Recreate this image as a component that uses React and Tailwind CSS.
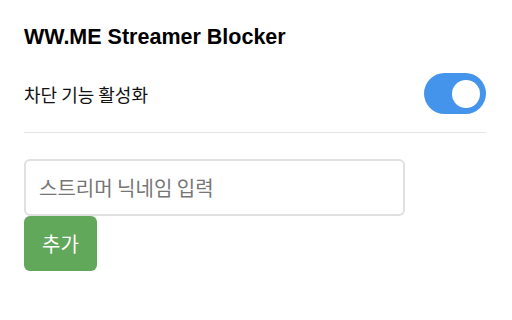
import React, { useState } from 'react';

const kr = { fontFamily: '"Noto Sans CJK KR", "Noto Sans", sans-serif' };

export default function App() {
  const [enabled, setEnabled] = useState(true);
  const [name, setName] = useState('');

  return (
    <div className="w-[512px] h-[320px] bg-white px-[24px] pt-[25px]">
      {/* header */}
      <h1
        className="text-[21.5px] leading-[24px] font-bold text-black"
        style={{ fontFamily: '"Liberation Sans", Arial, sans-serif' }}
      >
        WW.ME Streamer Blocker
      </h1>

      {/* toggle row */}
      <div className="mt-[24px] flex items-center justify-between pr-[2px]">
        <span className="text-[18px] leading-[24px] text-[#111]" style={kr}>
          차단 기능 활성화
        </span>
        <button
          onClick={() => setEnabled(!enabled)}
          className={`relative w-[62px] h-[41px] rounded-full ${enabled ? 'bg-[#4394ea]' : 'bg-[#cccccc]'}`}
        >
          <span
            className={`absolute top-[6.5px] w-[28px] h-[28px] rounded-full bg-white ${enabled ? 'right-[6px]' : 'left-[6px]'}`}
          />
        </button>
      </div>

      <div className="mt-[18px] mr-[2px] border-t border-[#e6e6e6]" />

      {/* add streamer */}
      <div className="mt-[26px] flex flex-col items-start">
        <input
          value={name}
          onChange={(e) => setName(e.target.value)}
          placeholder="스트리머 닉네임 입력"
          className="w-[381px] h-[57px] px-[13px] rounded-[6px] border-2 border-[#e0e0e0] text-[20px] text-[#333] placeholder:text-[#767676] outline-none"
          style={kr}
        />
        <button
          className="w-[73px] h-[55px] rounded-[6px] bg-[#61a85a] text-white text-[20px]"
          style={kr}
        >
          추가
        </button>
      </div>
    </div>
  );
}
